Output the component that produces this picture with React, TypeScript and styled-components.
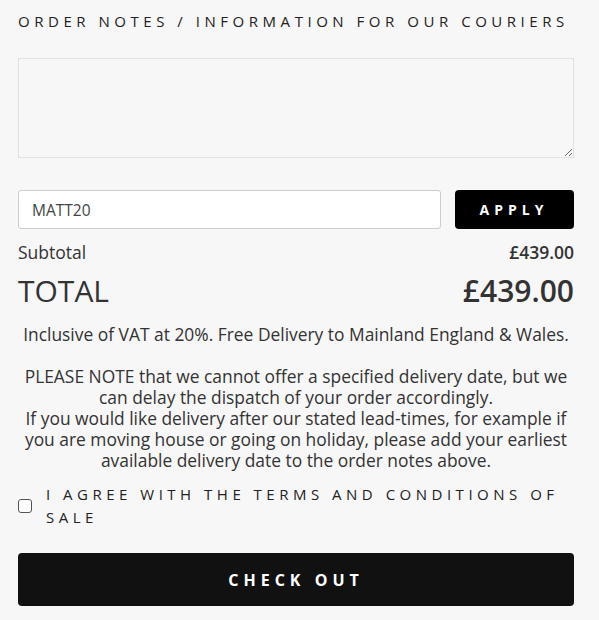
import React from "react";
import styled, { createGlobalStyle } from "styled-components";

const Global = createGlobalStyle`
  html, body { margin: 0; padding: 0; background: #f7f7f7; }
  body { font-family: "Open Sans", "Liberation Sans", sans-serif; color: #333; }
  * { box-sizing: border-box; }
`;

const Page = styled.div`
  padding: 11px 25px 14px 18px;
  display: flex;
  flex-direction: column;
`;

const Heading = styled.label`
  font-size: 15px;
  letter-spacing: 4.53px;
  text-transform: uppercase;
  color: #222;
  line-height: 20px;
  white-space: nowrap;
`;

const Notes = styled.textarea`
  margin-top: 27px;
  height: 100px;
  width: 100%;
  background: #f7f7f7;
  border: 1px solid #e2e2e2;
  resize: vertical;
  font: inherit;
  display: block;
`;

const CouponRow = styled.div`
  margin-top: 32px;
  display: flex;
  gap: 14px;
`;

const CouponInput = styled.input`
  flex: 1;
  height: 39px;
  border: 1px solid #ccc;
  border-radius: 3px;
  background: #fff;
  padding: 0 13px;
  font-family: "Open Sans", sans-serif;
  font-size: 15.5px;
  color: #444;
`;

const DarkButton = styled.button<{ $bg?: string }>`
  background: ${(p) => p.$bg || "#000"};
  color: #fff;
  border: none;
  border-radius: 4px;
  font-family: "Open Sans", sans-serif;
  font-weight: 700;
  text-transform: uppercase;
  cursor: pointer;
`;

const ApplyButton = styled(DarkButton)`
  width: 119px;
  height: 39px;
  font-size: 14px;
  letter-spacing: 5px;
  padding-left: 5px;
`;

const SumRow = styled.div<{ $big?: boolean }>`
  display: flex;
  justify-content: space-between;
  align-items: baseline;
  font-size: ${(p) => (p.$big ? "30px" : "17.5px")};
  line-height: ${(p) => (p.$big ? "42px" : "24px")};
  margin-top: ${(p) => (p.$big ? "6px" : "11px")};
`;

const Amount = styled.span`
  font-weight: 600;
`;

const Info = styled.p`
  margin: 0;
  text-align: center;
  font-size: 17.4px;
  line-height: 21px;
`;

const VatInfo = styled(Info)`
  margin-top: 12px;
`;

const Notice = styled(Info)`
  margin-top: 21px;
`;

const AgreeRow = styled.label`
  margin-top: 12px;
  display: flex;
  align-items: center;
  gap: 14px;
`;

const Box = styled.input`
  width: 14px;
  height: 14px;
  margin: 0;
  flex: none;
  appearance: none;
  border: 1px solid #555;
  border-radius: 3px;
  background: #fff;
`;

const AgreeText = styled.span`
  font-size: 15px;
  letter-spacing: 4.5px;
  line-height: 23px;
  text-transform: uppercase;
  color: #222;
`;

const CheckoutButton = styled(DarkButton)`
  margin-top: 24px;
  height: 53px;
  width: 100%;
  font-size: 16px;
  letter-spacing: 5px;
`;

export default function App() {
  return (
    <>
      <Global />
      <Page>
        <Heading>Order notes / Information for our couriers</Heading>
        <Notes />
        <CouponRow>
          <CouponInput defaultValue="MATT20" />
          <ApplyButton>Apply</ApplyButton>
        </CouponRow>
        <SumRow>
          <span>Subtotal</span>
          <Amount>£439.00</Amount>
        </SumRow>
        <SumRow $big>
          <span>TOTAL</span>
          <Amount>£439.00</Amount>
        </SumRow>
        <VatInfo>Inclusive of VAT at 20%. Free Delivery to Mainland England &amp; Wales.</VatInfo>
        <Notice>
          PLEASE NOTE that we cannot offer a specified delivery date, but we can delay the dispatch of your order accordingly.
          <br />
          If you would like delivery after our stated lead-times, for example if you are moving house or going on holiday, please add your earliest available delivery date to the order notes above.
        </Notice>
        <AgreeRow>
          <Box type="checkbox" />
          <AgreeText>I agree with the terms and conditions of sale</AgreeText>
        </AgreeRow>
        <CheckoutButton $bg="#111">Check out</CheckoutButton>
      </Page>
    </>
  );
}
